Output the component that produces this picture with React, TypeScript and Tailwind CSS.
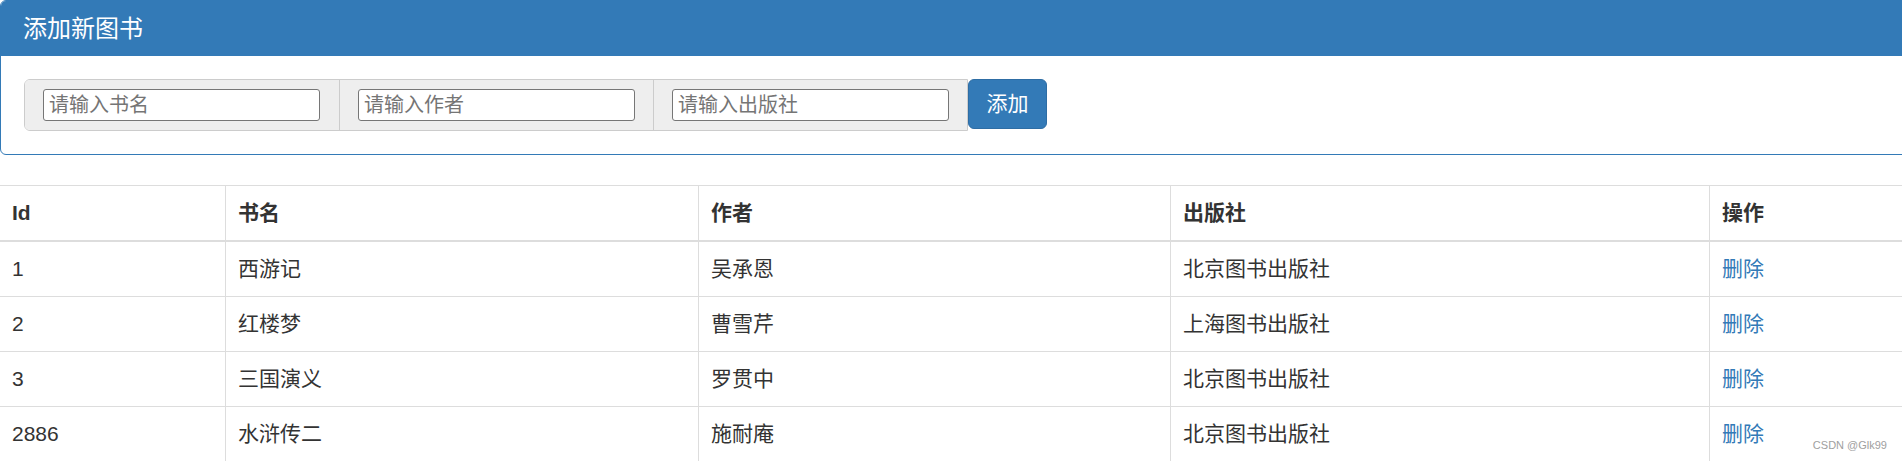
import React from 'react'

const books = [
  { id: 1, name: '西游记', author: '吴承恩', publisher: '北京图书出版社' },
  { id: 2, name: '红楼梦', author: '曹雪芹', publisher: '上海图书出版社' },
  { id: 3, name: '三国演义', author: '罗贯中', publisher: '北京图书出版社' },
  { id: 2886, name: '水浒传二', author: '施耐庵', publisher: '北京图书出版社' },
]

const font = "font-['Liberation_Sans','Noto_Sans_CJK_SC',sans-serif]"
const cols = 'grid grid-cols-[226px_473px_472px_539px_230px]'
const cell = 'border-l border-[#ddd] px-[12px] flex items-center'

function Addon({ placeholder, first }: { placeholder: string; first?: boolean }) {
  return (
    <div
      className={`w-[314px] h-full flex items-center pl-[18px] bg-[#eee] ${
        first ? '' : 'border-l border-[#ccc]'
      }`}
    >
      <input
        placeholder={placeholder}
        className="w-[277px] h-[32px] px-[5px] border border-[#767676] rounded-[3px] bg-white text-[20px] text-[#333] placeholder:text-[#757575] outline-none"
      />
    </div>
  )
}

export default function App() {
  return (
    <div className={`relative w-[1902px] h-[461px] overflow-hidden bg-white text-[#333] ${font}`}>
      {/* panel */}
      <div className="w-[1940px] border border-[#337ab7] rounded-[6px] overflow-hidden">
        <div className="h-[55px] bg-[#337ab7] px-[22px] flex items-center text-white text-[24px]">
          添加新图书
        </div>
        <div className="px-[23px] pt-[23px] pb-[23px] flex items-start">
          <div className="h-[52px] flex border border-[#ccc] rounded-l-[6px] overflow-hidden">
            <Addon placeholder="请输入书名" first />
            <Addon placeholder="请输入作者" />
            <Addon placeholder="请输入出版社" />
          </div>
          <button className="h-[50px] w-[79px] rounded-[6px] bg-[#337ab7] border border-[#2e6da4] text-white text-[21px]">
            添加
          </button>
        </div>
      </div>

      {/* table */}
      <div className="ml-[-1px] mt-[30px] w-[1940px] border-t border-[#ddd] text-[21px]">
        <div className={`${cols} h-[56px] border-b-2 border-[#ddd] font-bold`}>
          <div className={cell}>Id</div>
          <div className={cell}>书名</div>
          <div className={cell}>作者</div>
          <div className={cell}>出版社</div>
          <div className={cell}>操作</div>
        </div>
        {books.map((b) => (
          <div key={b.id} className={`${cols} h-[55px] border-b border-[#ddd]`}>
            <div className={cell}>{b.id}</div>
            <div className={cell}>{b.name}</div>
            <div className={cell}>{b.author}</div>
            <div className={cell}>{b.publisher}</div>
            <div className={cell}>
              <a href="#" className="text-[#337ab7]">删除</a>
            </div>
          </div>
        ))}
      </div>

      <div className="absolute right-[15px] bottom-[8px] text-[11px] text-[#a0a0a0]">CSDN @Glk99</div>
    </div>
  )
}
